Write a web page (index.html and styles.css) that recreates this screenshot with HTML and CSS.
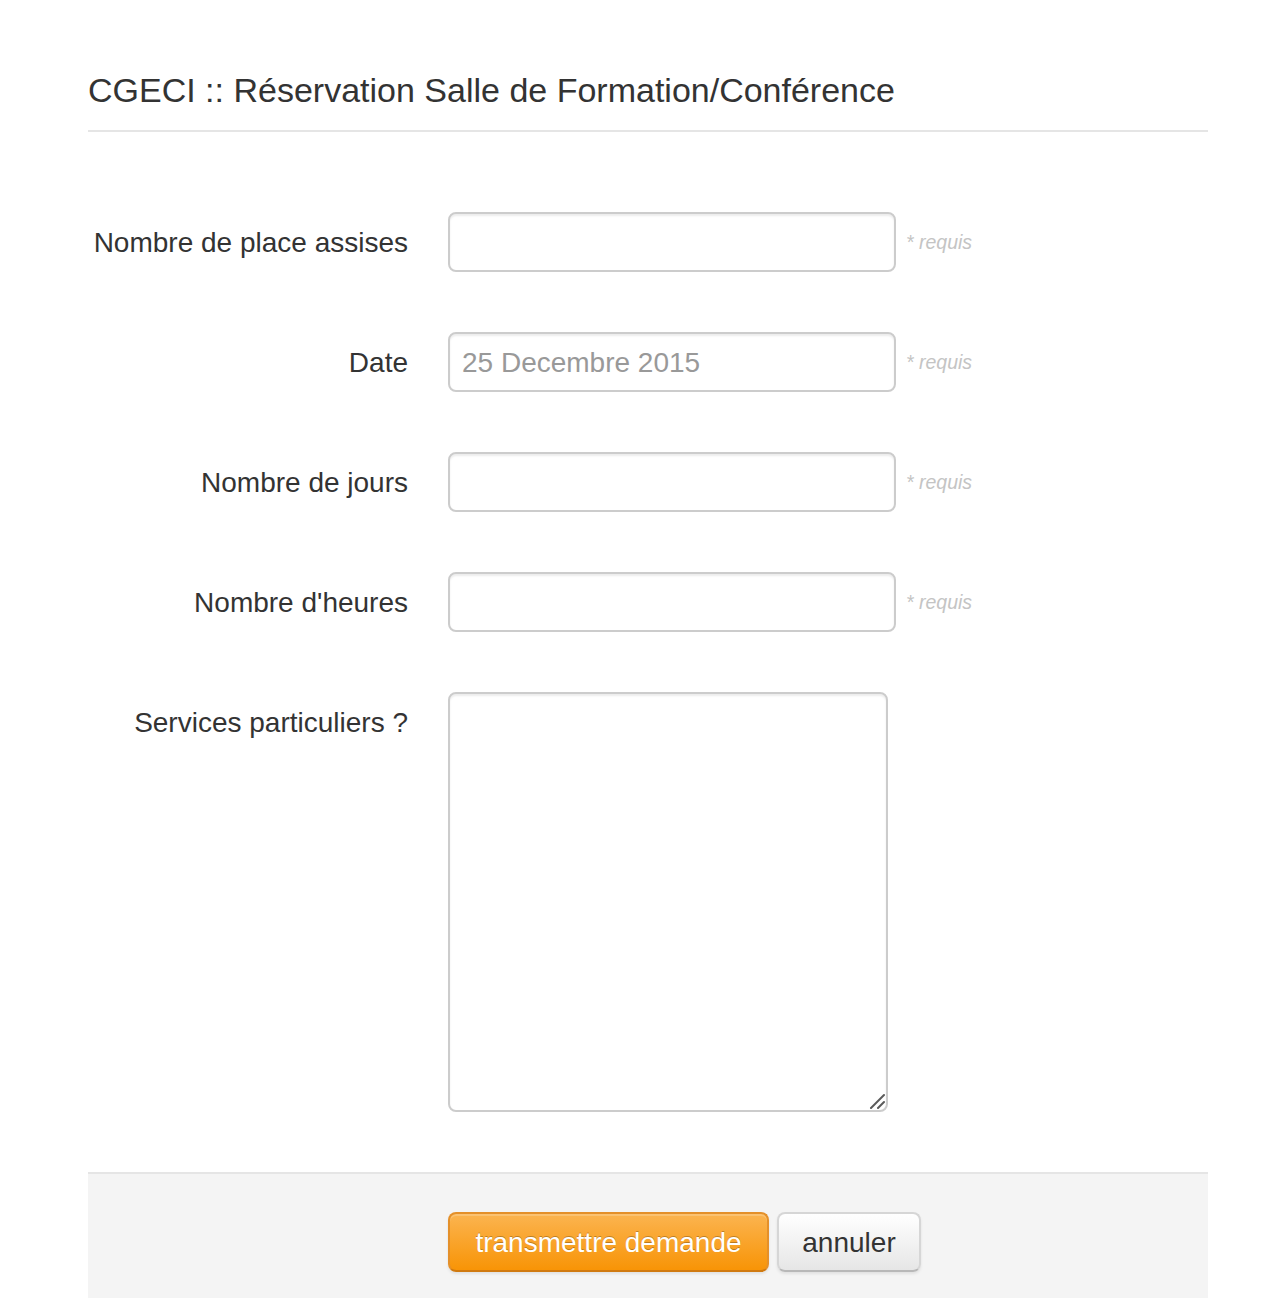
FILE: index.html
```html
<!DOCTYPE html>
<html lang="fr">
<head>
<meta charset="utf-8">
<title>CGECI :: Réservation Salle de Formation/Conférence</title>
<link rel="stylesheet" href="styles.css">
</head>
<body>
<div class="page">
  <form class="form">
    <div class="legend">CGECI :: Réservation Salle de Formation/Conférence</div>
    <div class="group">
      <label class="label" for="places">Nombre de place assises</label>
      <div class="controls">
        <input class="input" id="places" type="text">
        <span class="help">* requis</span>
      </div>
    </div>
    <div class="group">
      <label class="label" for="date">Date</label>
      <div class="controls">
        <input class="input" id="date" type="text" placeholder="25 Decembre 2015">
        <span class="help">* requis</span>
      </div>
    </div>
    <div class="group">
      <label class="label" for="jours">Nombre de jours</label>
      <div class="controls">
        <input class="input" id="jours" type="text">
        <span class="help">* requis</span>
      </div>
    </div>
    <div class="group">
      <label class="label" for="heures">Nombre d'heures</label>
      <div class="controls">
        <input class="input" id="heures" type="text">
        <span class="help">* requis</span>
      </div>
    </div>
    <div class="group group-last">
      <label class="label" for="services">Services particuliers ?</label>
      <div class="controls">
        <div class="textarea-wrap">
          <textarea class="textarea" id="services"></textarea>
          <svg class="grip" width="16" height="16" viewBox="0 0 16 16" aria-hidden="true">
            <line x1="2" y1="15" x2="15" y2="2" stroke="#5a5a5a" stroke-width="2" stroke-linecap="round"/>
            <line x1="9" y1="15" x2="15" y2="9" stroke="#5a5a5a" stroke-width="2" stroke-linecap="round"/>
          </svg>
        </div>
      </div>
    </div>
    <div class="actions">
      <button type="button" class="btn btn-warning">transmettre demande</button>
      <button type="button" class="btn btn-default">annuler</button>
    </div>
  </form>
</div>
</body>
</html>
```
FILE: styles.css
```css
html, body {
  margin: 0;
  padding: 0;
  background: #fff;
}

body {
  font-family: "Liberation Sans", Arial, Helvetica, sans-serif;
  color: #333;
  font-size: 28px;
  line-height: 40px;
}

.page {
  width: 1120px;
  margin-left: 88px;
  padding-top: 50px;
}

.legend {
  font-size: 34px;
  line-height: 80px;
  color: #333;
  border-bottom: 2px solid #e5e5e5;
  margin-bottom: 80px;
}

.group {
  display: grid;
  grid-template-columns: 320px 1fr;
  column-gap: 40px;
  margin-bottom: 60px;
}

.group-last {
  margin-bottom: 60px;
}

.label {
  text-align: right;
  padding-top: 11px;
  line-height: 40px;
  font-size: 28px;
  color: #333;
}

.controls {
  display: flex;
  align-items: center;
  align-self: start;
}

.input {
  box-sizing: border-box;
  width: 448px;
  height: 60px;
  padding: 9px 12px 7px;
  border: 2px solid #ccc;
  border-radius: 8px;
  font-family: "Liberation Sans", Arial, sans-serif;
  font-size: 28px;
  line-height: 40px;
  color: #555;
  background: #fff;
  box-shadow: inset 0 2px 2px rgba(0, 0, 0, 0.075);
  outline: none;
  margin: 0;
}

.input::placeholder {
  color: #999;
  opacity: 1;
}

.help {
  margin-left: 10px;
  font-size: 19.5px;
  font-style: italic;
  color: #c4c4c4;
  line-height: 40px;
}

.textarea-wrap {
  position: relative;
  width: 440px;
  height: 420px;
}

.textarea {
  box-sizing: border-box;
  display: block;
  width: 440px;
  height: 420px;
  padding: 8px 12px;
  border: 2px solid #ccc;
  border-radius: 8px;
  font-family: "Liberation Sans", Arial, sans-serif;
  font-size: 28px;
  line-height: 40px;
  background: #fff;
  box-shadow: inset 0 2px 2px rgba(0, 0, 0, 0.075);
  outline: none;
  margin: 0;
  resize: none;
}

.grip {
  position: absolute;
  right: 3px;
  bottom: 3px;
  pointer-events: none;
}

.actions {
  background: #f4f4f4;
  border-top: 2px solid #e5e5e5;
  padding: 38px 40px 40px 360px;
  display: flex;
  gap: 8px;
}

.btn {
  box-sizing: border-box;
  height: 60px;
  padding: 9px 20px 7px;
  font-family: "Liberation Sans", Arial, sans-serif;
  font-size: 28px;
  line-height: 40px;
  border-radius: 8px;
  cursor: pointer;
  margin: 0;
}

.btn-warning {
  width: 321px;
  color: #fff;
  text-shadow: 0 -1px 0 rgba(0, 0, 0, 0.25);
  background: linear-gradient(to bottom, #fbb450, #f89406);
  border: 2px solid #e4902a;
  border-bottom-color: #d07a10;
  box-shadow: inset 0 2px 0 rgba(255, 255, 255, 0.2), 0 2px 3px rgba(0, 0, 0, 0.08);
}

.btn-default {
  width: 144px;
  color: #333;
  background: linear-gradient(to bottom, #ffffff, #e6e6e6);
  border: 2px solid #d6d6d6;
  border-bottom-color: #b8b8b8;
  box-shadow: inset 0 2px 0 rgba(255, 255, 255, 0.2), 0 2px 3px rgba(0, 0, 0, 0.08);
}
```
